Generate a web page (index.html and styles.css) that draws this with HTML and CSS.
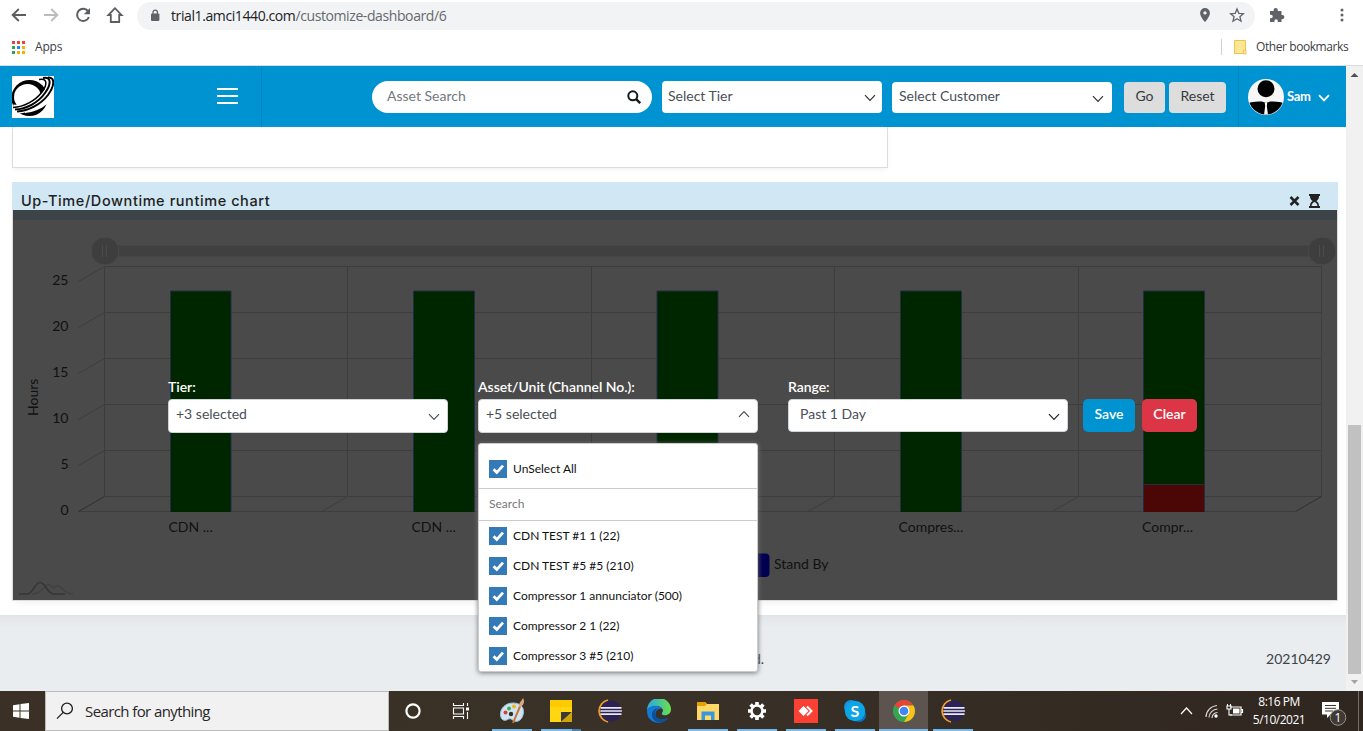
FILE: index.html
```html
<!DOCTYPE html>
<html lang="en">
<head>
<meta charset="utf-8">
<title>Customize Dashboard</title>
<link rel="stylesheet" href="styles.css">
</head>
<body>
<svg class="defs" width="0" height="0">
  <defs>
    <symbol id="chev" viewBox="0 0 12 8"><path d="M1 1.2 6 6.4l5-5.2" fill="none" stroke="currentColor" stroke-width="1.2"/></symbol>
    <symbol id="check" viewBox="0 0 18 18"><path d="M4.6 9.2 7.8 12.4 14 5.6" fill="none" stroke="#fff" stroke-width="2.8"/></symbol>
    <symbol id="eclipse" viewBox="0 0 26 24">
      <path d="M11 1.2A11 11 0 0 0 11 22.8" fill="none" stroke="#f29a2e" stroke-width="1.8"/>
      <circle cx="14" cy="12" r="10.5" fill="#2c2255"/>
      <path d="M3.5 8.9h21M3.3 12h21.6M3.5 15.1h21" stroke="#e9e7f2" stroke-width="1.7"/>
    </symbol>
  </defs>
</svg>
<div class="screen">
  <div class="toolbar">
    <svg class="nav" viewBox="0 0 130 30" width="130" height="30">
      <path d="M26 15H13M18.8 9 12.6 15l6.2 6" fill="none" stroke="#5a5d61" stroke-width="1.8"/>
      <path d="M44 15h13M51.2 9l6.2 6-6.2 6" fill="none" stroke="#b9bbbd" stroke-width="1.8"/>
      <path d="M88.3 11.5A6.1 6.1 0 1 0 88.9 17" fill="none" stroke="#5a5d61" stroke-width="2"/>
      <path d="M90 8v6.2h-6.2z" fill="#5a5d61"/>
      <path d="M115 8.2 108.4 15h2.4v7h8.4v-7h2.4z" fill="none" stroke="#5a5d61" stroke-width="1.8"/>
    </svg>
    <div class="address">
      <svg class="lock" viewBox="0 0 10 13" width="10" height="13"><rect x="1" y="4.5" width="8.4" height="7.5" rx="1" fill="#5f6368"/><path d="M3 5V3.3a2.2 2.2 0 0 1 4.4 0V5" fill="none" stroke="#5f6368" stroke-width="1.3"/></svg>
      <span class="url">trial1.amci1440.com<span class="path">/customize-dashboard/6</span></span>
      <svg class="addr-icons" viewBox="0 0 50 20" width="50" height="20">
        <path fill-rule="evenodd" d="M8 3a4.9 4.9 0 0 0-4.9 4.9C3.100 11.500 8 17 8 17s4.900-5.500 4.900-9.100A4.900 4.900 0 0 0 8 3zm0 3.200a1.700 1.700 0 1 1 0 3.400 1.700 1.700 0 0 1 0-3.400z" fill="#5f6368"/>
        <path d="m40 4 1.800 4.300 4.600.4-3.500 3 1.100 4.500-4-2.400-4 2.400 1.100-4.500-3.500-3 4.600-.4z" fill="none" stroke="#5f6368" stroke-width="1.300"/>
      </svg>
    </div>
    <svg class="ext" viewBox="0 0 16 16" width="16" height="16"><path d="M1 4h3.600V3a2 2 0 0 1 4.200 0v1H12.500v4h.8a2 2 0 0 1 0 4.200h-.8V15H8.800v-1a1.600 1.600 0 0 0-3.400 0v1H1v-3.800h1a1.700 1.700 0 0 0 0-3.500H1z" fill="#5f6368"/></svg>
    <svg class="dots" viewBox="0 0 4 16" width="4" height="16"><g fill="#5f6368"><circle cx="2" cy="3" r="1.500"/><circle cx="2" cy="8" r="1.500"/><circle cx="2" cy="13" r="1.500"/></g></svg>
  </div>
  <div class="bookmarks">
    <svg viewBox="0 0 13 13" width="13" height="13">
      <path d="M0 0h3v3H0zM5 0h3v3H5zM10 0h3v3h-3z" fill="#ea4335"/><path d="M0 5h3v3H0zM0 10h3v3H0z" fill="#34a053"/><path d="M5 5h3v3H5z" fill="#2a84f0"/><path d="M10 5h3v3h-3zM5 10h3v3H5zM10 10h3v3h-3z" fill="#fbac05"/>
    </svg>
    <span class="apps">Apps</span>
    <div class="other">
      <svg viewBox="0 0 13 15" width="13" height="15"><path d="M.5.5h11v13H.500z" fill="#ffe597" stroke="#e8c64a"/><path d="M9.500 14V10h2.500v4z" fill="#ffe597" stroke="#e8c64a" stroke-width=".8"/></svg>
      <span class="other-text">Other bookmarks</span>
    </div>
  </div>
  <div class="viewport">
    <div class="page">
      <header class="header">
        <div class="brand">
          <svg class="logo" viewBox="0 0 42 42" width="42" height="42">
            <rect width="42" height="42" fill="#fff"/>
            <ellipse cx="17.500" cy="22" rx="18" ry="18"/>
            <ellipse cx="15.500" cy="21" rx="13.500" ry="13" fill="#fff"/>
            <path d="M13 35C24 32 32 26 37 17V42H36C37 36 36 32 35 28 29 33 22 36 13 37z" fill="#fff"/>
            <g fill="none">
              <path d="M30 3C45-1 42 10 34 19 25 29 12 34 1 33" stroke="#fff" stroke-width="9"/>
              <path d="M27 3.500C35 1.500 36 8 30 16 23 25 12 31 1 31.500" stroke="#000" stroke-width="1.500"/>
              <path d="M31 2C40 0 39 9 33 17 26 27 14 33 3 33.500" stroke="#000" stroke-width="2"/>
              <path d="M36 1.500C44 1 42 11 36 19 29 28 17 35 5 35.500" stroke="#000" stroke-width="2"/>
            </g>
          </svg>
          <div class="burger"><i></i><i></i><i></i></div>
        </div>
        <div class="filters">
          <div class="search"><span>Asset Search</span>
            <svg viewBox="0 0 14 14" width="14" height="14"><circle cx="5.800" cy="5.800" r="4.500" fill="none" stroke="#16191c" stroke-width="2"/><path d="m9.200 9.200 4 4" stroke="#16191c" stroke-width="2.400"/></svg>
          </div>
          <div class="pick tier"><span>Select Tier</span><svg width="12" height="8"><use href="#chev"/></svg></div>
          <div class="pick customer"><span>Select Customer</span><svg width="12" height="8"><use href="#chev"/></svg></div>
          <div class="gray go">Go</div><div class="gray reset">Reset</div>
        </div>
        <div class="user">
          <svg viewBox="0 0 36 36" width="36" height="36"><defs><clipPath id="av"><circle cx="18" cy="18" r="17.500"/></clipPath></defs><circle cx="18" cy="18" r="18" fill="#f7f7f7"/><g clip-path="url(#av)"><circle cx="18" cy="9.800" r="8.500"/><path d="M0 24Q5 22 14 22.500l4 1.500 4-1.500Q31 22 36 24V36H0z"/><path d="M16.800 24h2.400l-.4 3 1.200 9h-4l1.200-9z" fill="#fff"/></g></svg>
          <span>Sam</span>
          <svg class="user-chev" viewBox="0 0 12 8" width="12" height="8"><path d="M1 1.200 6 6.400l5-5.200" fill="none" stroke="#fff" stroke-width="1.800"/></svg>
        </div>
      </header>
      <main class="content">
        <div class="card-rest"></div>
        <section class="panel">
          <div class="panel-head"><h2>Up-Time/Downtime runtime chart</h2>
            <svg viewBox="0 0 32 14" width="32" height="14"><path d="m1.500 3 8 8m0-8-8 8" stroke="#222" stroke-width="2.500"/><path fill-rule="evenodd" d="M20 0h11v2h-1c0 3-1.200 4-2.700 5 1.500 1 2.700 2 2.700 5h1v2H20v-2h1c0-3 1.200-4 2.700-5C22.200 6 21 5 21 2h-1zM22.600 12h5.800c0-2-1.400-3.500-2.900-4-1.500.5-2.900 2-2.900 4z" fill="#222"/></svg>
          </div>
          <div class="chart">
            <svg class="plot" viewBox="13 210 1324 390" width="1324" height="390">
              <rect x="13" y="210" width="1324" height="10" fill="#3c4448"/>
              <path d="M105 251H1322" stroke="#404040" stroke-width="11"/>
              <g fill="#3e3e3e" stroke="#4a4a4a"><circle cx="105" cy="251" r="14"/><circle cx="1322" cy="251" r="14"/></g>
              <path d="M102.500 245v12m4-12v12M1319.500 245v12m4-12v12" stroke="#4b4b4b"/>
              <g fill="none" stroke="#3d3d3d">
                <path d="M104.500 266.500H1321.500M104.500 312.500H1321.500M104.500 358.500H1321.500M104.500 404.500H1321.500M104.500 450.500H1321.500M104.500 496.500H1321.500M78.500 511.500H1296"/>
                <path d="M104.500 266.500V496.500M347.500 266.500V496.500L322 511.500M591.500 266.500V496.500L565 511.500M834.500 266.500V496.500L808 511.500M1078.500 266.500V496.500L1052 511.500M1321.500 266.500V496.500"/>
                <path d="m104.500 266.500-26 15M104.500 312.500l-26 15M104.500 358.500l-26 15M104.500 404.500l-26 15M104.500 450.500l-26 15"/>
                <path d="m104.500 496.500-26 15M1321.500 496.500l-26 15" stroke="#303030"/>
              </g>
              <g fill="#002600" stroke="#222c44">
                <path d="M170.500 512V291H231V512M413.500 512V291H474.500V512M657 512V291H718V512M900.500 512V291H961.500V512M1143.500 512V291H1204.500V512"/>
                <path d="M1143.500 512V484.500H1204.500V512" fill="#4b0606"/>
              </g>
              <g class="ticks" text-anchor="end"><text x="68.500" y="285">25</text><text x="68.500" y="331">20</text><text x="68.500" y="377">15</text><text x="68.500" y="423">10</text><text x="68.500" y="469">5</text><text x="68.500" y="515">0</text></g>
              <g class="ticks"><text transform="translate(38 416) rotate(-90)">Hours</text><text x="168.500" y="532">CDN ...</text><text x="411.500" y="532">CDN ...</text><text x="898.500" y="532">Compres...</text><text x="1142" y="532">Compr...</text><text x="774" y="569">Stand By</text></g>
              <rect x="746" y="553.500" width="23.500" height="23.500" rx="4" fill="#000050"/>
              <path d="M32 594C40 594 42 588 46 586 52 581 52 592 56 586 62 583 61 594 73 594" fill="none" stroke="#424242" stroke-width="1.500"/>
              <path d="M19 594h8C34 594 34 582.500 40 582.500S47 594 54 594h11" fill="none" stroke="#363636" stroke-width="1.700"/>
            </svg>
            <div class="form">
              <div class="field"><label>Tier:</label><div class="select"><span>+3 selected</span><svg width="12" height="8"><use href="#chev"/></svg></div></div>
              <div class="field"><label>Asset/Unit (Channel No.):</label><div class="select"><span>+5 selected</span><svg class="up" width="12" height="8"><use href="#chev"/></svg></div>
                <div class="menu">
                  <div class="option all"><svg width="18" height="18"><use href="#check"/></svg><span>UnSelect All</span></div>
                  <div class="menu-search">Search</div>
                  <div class="option"><svg width="18" height="18"><use href="#check"/></svg><span>CDN TEST #1 1 (22)</span></div>
                  <div class="option"><svg width="18" height="18"><use href="#check"/></svg><span>CDN TEST #5 #5 (210)</span></div>
                  <div class="option"><svg width="18" height="18"><use href="#check"/></svg><span>Compressor 1 annunciator (500)</span></div>
                  <div class="option"><svg width="18" height="18"><use href="#check"/></svg><span>Compressor 2 1 (22)</span></div>
                  <div class="option"><svg width="18" height="18"><use href="#check"/></svg><span>Compressor 3 #5 (210)</span></div>
                </div>
              </div>
              <div class="field"><label>Range:</label><div class="select native"><span>Past 1 Day</span><svg width="12" height="8"><use href="#chev"/></svg></div></div>
              <div class="btn save">Save</div><div class="btn clear">Clear</div>
            </div>
          </div>
        </section>
      </main>
      <footer class="footer"><span class="rights">d.</span><span>20210429</span></footer>
    </div>
    <div class="scroll">
      <svg viewBox="0 0 17 17" width="17" height="17"><path d="M4.500 11 8.500 7l4 4z" fill="#505050"/></svg>
      <div class="thumb"></div>
      <svg viewBox="0 0 17 17" width="17" height="17"><path d="M5 6h7l-3.500 4z" fill="#a3a3a3"/></svg>
    </div>
  </div>
  <div class="taskbar">
    <div class="start"><svg viewBox="0 0 16 16" width="16" height="16"><path d="M0 2.200 6.500 1.300v6.200H0zM7.500 1.100 16 0v7.500H7.500zM0 8.500h6.500v6.200L0 13.800zM7.500 8.500H16V16l-8.500-1.100z" fill="#fff"/></svg></div>
    <div class="task-search"><svg viewBox="0 0 18 18" width="18" height="18"><circle cx="11" cy="6.500" r="5.400" fill="none" stroke="#1c1c1c" stroke-width="1.300"/><path d="M7.200 10.400 1 16.600" stroke="#1c1c1c" stroke-width="1.300"/></svg><span>Search for anything</span></div>
    <div class="task sys"><svg viewBox="0 0 18 18" width="18" height="18"><circle cx="9" cy="9" r="6.600" fill="none" stroke="#fff" stroke-width="2.200"/></svg></div>
    <div class="task view"><svg viewBox="0 0 18 16" width="18" height="16"><path d="M1.500 0v2.500h10V0M1.500 16v-2.500h10V16M1.500 5h10v6h-10zM15.500 0v3M15.500 9v7" fill="none" stroke="#fff" stroke-width="1.100"/><path d="M14 4.500h3v3h-3z" fill="#fff"/></svg></div>
    <div class="task on"><svg viewBox="0 0 26 26" width="26" height="26"><path d="M14 5C6 5 1 11 1.500 17c.3 5 4 6.500 7 4.500 2-1.500 4-.5 5 .5 5 4 11-1 11-8.500C24.500 8 20 5 14 5z" fill="#cfe4f2" stroke="#9bc0da"/><circle cx="6.500" cy="14.500" r="2" fill="#e03b2e"/><circle cx="10" cy="10.500" r="2" fill="#35b04a"/><circle cx="15" cy="8.500" r="2" fill="#f0b323"/><circle cx="12" cy="16" r="2.200" fill="#32302c"/><path d="m13 25 7-17 2 .8L15 25z" fill="#c87533"/><path d="M20 8.500C20 4 22 4 24 0c2 3 1 7-2.500 9z" fill="#d9a87a"/></svg></div>
    <div class="task on split"><svg viewBox="0 0 22 22" width="22" height="22"><path d="M0 0h22v22H0z" fill="#ffd60f"/><path d="M0 0h22v7H0z" fill="#ffcb00"/><path d="M11 12h11L11 22z" fill="#3b3a39"/><path d="M22 12v10H11z" fill="#cfa40a"/></svg></div>
    <div class="task"><svg width="26" height="24"><use href="#eclipse"/></svg></div>
    <div class="task"><svg viewBox="0 0 24 24" width="24" height="24"><defs><linearGradient id="eg"><stop stop-color="#2aa7e5"/><stop offset="1" stop-color="#6be04b"/></linearGradient></defs><path d="M0 12A12 12 0 0 1 24 10c0 5-4 7-8 6-2-1-1-2 0-4 0-3-3-5-7-5-5 0-9 3-9 5z" fill="url(#eg)"/><path d="M0 12C2 5 14 6 15 10c-5-1-8 4-6 8s8 4 12 1C15 27 0 25 0 12z" fill="#1479cf"/><path d="M12 9c-5 1-6 10 2 11 3 0 6-1 7.500-1C15 27 5 23 5 16c0-4 3-7 7-7z" fill="#0b509b"/></svg></div>
    <div class="task on"><svg viewBox="0 0 22 20" width="22" height="20"><path d="M0 1h8l2 2h12v16H0z" fill="#ffd867"/><path d="M0 1h8l2 2-2 2H0z" fill="#e5a100"/><path d="M4.500 19v-8.500h13V19h-3.500v-4.500H8V19z" fill="#3697dd"/></svg></div>
    <div class="task on"><svg viewBox="0 0 20 20" width="20" height="20"><circle cx="10" cy="10" r="5.500" fill="none" stroke="#fff" stroke-width="2.600"/><g stroke="#fff" stroke-width="3.600"><path d="M10 1v3M10 16v3M1 10h3M16 10h3M3.600 3.600l2.200 2.200M14.200 14.200l2.200 2.200M3.600 16.400l2.200-2.200M14.200 5.800l2.200-2.200"/></g></svg></div>
    <div class="task on"><svg viewBox="0 0 24 24" width="24" height="24"><path d="M0 0h24v24H0z" fill="#fb4134"/><path d="m9.500 7 5 5-5 5-5-5z" fill="#fff"/><path d="m13 7.500 4.500 4.500-4.500 4.500" fill="none" stroke="#fff" stroke-width="2"/></svg></div>
    <div class="task on"><svg viewBox="0 0 24 24" width="24" height="24"><circle cx="8" cy="8" r="7" fill="#1493dc"/><circle cx="16" cy="16" r="7" fill="#0872c3"/><circle cx="12" cy="12" r="10.200" fill="#0ba5e8"/><text class="skype" x="12" y="18" text-anchor="middle">S</text></svg></div>
    <div class="task active"><svg viewBox="0 0 24 24" width="24" height="24"><circle cx="12" cy="12" r="11" fill="#35a552"/><path d="M12 12 2.500 6.500A11 11 0 0 1 21.500 6.500H12z" fill="#ea4335"/><path d="M12 6.500h9.500A11 11 0 0 1 12 23l5-8.500z" fill="#fbc116"/><circle cx="12" cy="12" r="5.500" fill="#fff"/><circle cx="12" cy="12" r="4.300" fill="#4285f4"/></svg></div>
    <div class="task on"><svg width="26" height="24"><use href="#eclipse"/></svg></div>
    <div class="tray">
      <svg viewBox="0 0 64 20" width="64" height="20">
        <path d="m1 13 5.500-6L12 13" fill="none" stroke="#fff" stroke-width="1.200"/>
        <g fill="none" stroke="#d8d5d2" stroke-width="1.200"><path d="M26 16A12 12 0 0 1 37 4.500M29 16.500a9 9 0 0 1 8.500-8.500M32 17a6 6 0 0 1 5.500-5.500"/></g><circle cx="36" cy="15" r="1.700" fill="#fff"/>
        <path d="M50 6h11v8H50M61 8.500h1.500v3H61" fill="none" stroke="#fff" stroke-width="1.200"/><path d="M53 7.500h6.500v5H53z" fill="#fff"/><path d="M47 5h4v3h-4zM47.500 3v2M50.500 3v2M49 8v6h3" fill="none" stroke="#fff" stroke-width="1.100"/>
      </svg>
      <div class="clock"><div class="time">8:16 PM</div><div class="date">5/10/2021</div></div>
      <svg class="note" viewBox="0 0 26 26" width="26" height="26"><path d="M1 2h17v12.500H9.500L6 18v-3.500H1z" fill="#fff"/><path d="M4 5.500h11M4 8.300h11M4 11h8" stroke="#3b322a"/><circle cx="17" cy="17.500" r="7.800" fill="#403a35" stroke="#96918d"/><text class="badge" x="17" y="22" text-anchor="middle">1</text></svg>
      <div class="desk"></div>
    </div>
  </div>
</div>
</body>
</html>
```
FILE: styles.css
```css
* { box-sizing: border-box; }
body { margin: 0; background: #fff; font-family: Lato, "Liberation Sans", sans-serif; font-size: 14px; color: #495057; overflow: hidden; }
svg { display: block; flex: none; }
span, label, h2 { white-space: nowrap; }
.defs { position: absolute; }
.screen { width: 1363px; height: 731px; display: flex; flex-direction: column; overflow: hidden; }

/* Browser chrome */
.toolbar { height: 30px; flex: none; display: flex; align-items: center; font-family: "Open Sans", sans-serif; }
.nav { margin-right: 7px; }
.address { width: 1118px; height: 28px; margin-top: 2px; border-radius: 14px; background: #f1f3f4; display: flex; align-items: center; padding: 0 8px 2px 13px; }
.lock { margin-top: 1px; }
.url { margin-left: 11px; font-size: 14px; letter-spacing: -0.4px; color: #202124; }
.path { color: #66696e; }
.addr-icons { margin-left: auto; }
.ext { margin-left: 14px; }
.dots { margin-left: 55px; }
.bookmarks { height: 36px; flex: none; border-bottom: 1px solid #dadce0; display: flex; align-items: center; padding: 0 14px 1px 12px; font: 12px "Open Sans", sans-serif; color: #3c4043; letter-spacing: -0.2px; }
.bookmarks > svg { margin-top: 1px; }
.apps { margin-left: 10px; padding-bottom: 2px; }
.other { margin-left: auto; height: 16px; border-left: 1px solid #cfd1d4; display: flex; align-items: center; padding-left: 12px; }
.other-text { margin-left: 9px; width: 93px; letter-spacing: -0.42px; padding-bottom: 2px; }

/* Page */
.viewport { height: 625px; flex: none; display: flex; }
.page { width: 1346px; display: flex; flex-direction: column; }
.header { height: 61px; flex: none; background: #0093d1; display: flex; }
.brand { width: 262px; border-right: 1px solid #0383bb; display: flex; justify-content: space-between; padding: 10px 23px 0 12px; }
.burger { display: flex; flex-direction: column; gap: 5px; padding-top: 12px; }
.burger i { width: 21px; height: 2px; background: #fff; }
.filters { width: 977px; border-right: 1px solid #0383bb; display: flex; padding: 15px 0 0 110px; }
.search { width: 280px; height: 32px; border-radius: 16px; background: #fff; color: #73797f; display: flex; justify-content: space-between; align-items: center; padding: 0 11px 0 15px; }
.search span { padding-bottom: 3px; }
.pick { width: 220px; height: 32px; margin-left: 10px; border-radius: 4px; background: #fff; display: flex; justify-content: space-between; align-items: center; padding: 0 6px 3px; }
.pick svg { margin-top: 5px; color: #333; }
.customer { height: 31px; margin-top: 1px; padding: 0 8px 4px 7px; }
.customer svg { margin-top: 7px; }
.gray { height: 31px; margin-top: 1px; border-radius: 4px; background: #ddd; color: #343a40; line-height: 28px; text-align: center; }
.go { width: 41px; margin-left: 12px; }
.reset { width: 57px; margin-left: 4px; }
.user { flex: 1; display: flex; align-items: center; padding-left: 9px; color: #fff; font-weight: 700; font-size: 13px; }
.user span { margin-left: 3px; width: 27px; letter-spacing: -0.3px; padding-bottom: 1px; }
.user-chev { margin: 2px 0 0 4px; }
.content { height: 488px; flex: none; padding: 0 8px 0 12px; background: #fff; }
.card-rest { width: 876px; height: 41px; border: 1px solid #dcdcdc; border-top: 0; box-shadow: 0 3px 6px -2px #eee; }
.panel { width: 1326px; height: 419px; margin-top: 14px; border: 1px solid #ddd; border-top: 0; box-shadow: 0 4px 8px -3px #eee; }
.panel-head { height: 28px; margin: 0 -1px; background: #d1e7f3; display: flex; justify-content: space-between; align-items: flex-start; padding: 9px 17px 0 9px; overflow: hidden; }
.panel-head svg { margin-top: 3px; }
.panel-head h2 { margin: 0; font: 500 14.5px/19px Inter, sans-serif; letter-spacing: 0.58px; color: #222; }
.chart { position: relative; height: 390px; background: #4a4a4a; }
.ticks { font-size: 14px; fill: #111; }
.form { position: absolute; inset: 0; display: flex; padding: 168px 0 0 155px; }
.field { position: relative; width: 280px; margin-right: 30px; }
.field label { display: block; height: 21px; line-height: 17px; color: #fff; font-weight: 600; letter-spacing: -0.04px; }
.select { height: 34px; border: 1px solid #ced4da; border-radius: 4px; background: #fff; display: flex; align-items: center; justify-content: space-between; padding: 0 7px 5px; }
.select svg { margin-top: 6px; }
.select .up { transform: scaleY(-1); margin-top: 1px; }
.native { height: 33px; padding: 0 7px 4px 11px; }
.native svg { color: #222; margin-top: 7px; }
.btn { height: 33px; margin-top: 21px; border-radius: 5px; color: #fff; font-weight: 600; line-height: 30px; text-align: center; }
.save { width: 52px; margin-left: -15px; background: #0093d1; }
.clear { width: 55px; margin-left: 7px; background: #dc3545; }
.menu { position: absolute; left: 0; top: 65px; width: 280px; height: 229px; z-index: 2; background: #fff; border: 1px solid #ccc; border-radius: 3px; box-shadow: 0 1px 5px #777; font-size: 12px; color: #111; }
.option { height: 30px; display: flex; align-items: center; padding-left: 10px; }
.option svg { background: #337ab7; margin-right: 6px; }
.option span { padding-bottom: 2px; }
.all { height: 45px; padding-top: 6px; border-bottom: 1px solid #ccc; }
.menu-search { height: 32px; border-bottom: 1px solid #ccc; padding-left: 10px; line-height: 29px; color: #777; }
.footer { flex: 1; background: linear-gradient(#e1e5e8, #e9edf0 12px); display: flex; justify-content: space-between; padding: 35px 15px 0 753px; color: #404346; }

.scroll { width: 17px; background: #f1f1f1; display: flex; flex-direction: column; }
.thumb { margin: 342px 2px 0; height: 249px; background: #c1c1c1; }

/* Taskbar */
.taskbar { height: 40px; flex: none; background: linear-gradient(90deg, #3a3025, #393127 50%, #302620); display: flex; }
.start { width: 45px; display: flex; align-items: center; justify-content: center; padding-right: 3px; }
.task-search { width: 344px; border: 1px solid #bbb; background: #f1f1f1; display: flex; align-items: center; padding-left: 10px; color: #262626; font: 15px "Open Sans", sans-serif; }
.task-search span { margin-left: 11px; letter-spacing: -0.6px; }
.task { width: 49px; position: relative; display: flex; align-items: center; justify-content: center; }
.sys { width: 48px; }
.view { width: 50px; padding-right: 2px; }
.on::after { content: ""; position: absolute; bottom: 0; left: 5px; width: 40px; height: 2px; background: #76b9ed; }
.split::after { background: linear-gradient(90deg, #76b9ed 31px, #4c7fa7 31px); }
.active { background: #5d544f; border-bottom: 2px solid #76b9ed; padding-top: 2px; }
.skype { font: 700 16px Lato, sans-serif; fill: #fff; }
.tray { flex: 1; display: flex; align-items: center; justify-content: flex-end; }
.clock { width: 64px; margin-left: 3px; text-align: center; color: #fff; font: 12px/18px "Open Sans", sans-serif; letter-spacing: -0.5px; }
.note { margin: 3px 11px 0 10px; }
.badge { font: 12px "Open Sans", sans-serif; fill: #fff; }
.desk { width: 5px; height: 40px; border-left: 1px solid #76706b; }
```
